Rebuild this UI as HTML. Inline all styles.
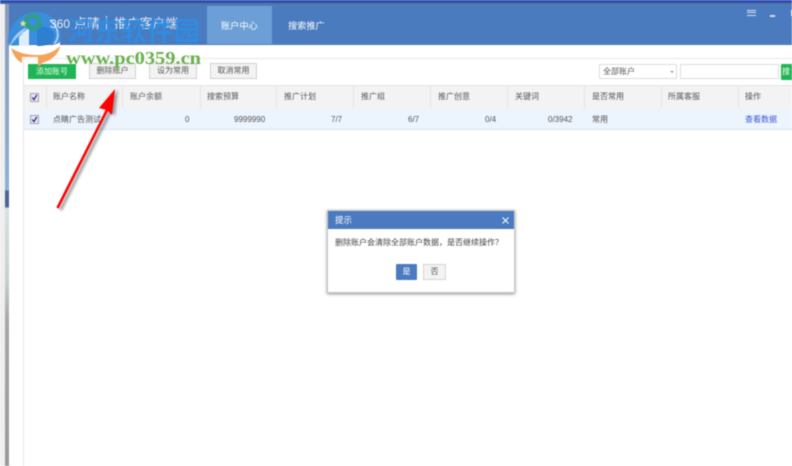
<!DOCTYPE html>
<html lang="zh-CN"><head><meta charset="utf-8">
<style>
*{box-sizing:border-box;margin:0;padding:0}
html,body{width:792px;height:466px;overflow:hidden;background:#fff}
body{font-family:"Liberation Sans","Noto Sans CJK SC",sans-serif;font-size:8px;color:#444;position:relative}
.a{position:absolute;white-space:nowrap}
.wrap{position:absolute;left:0;top:0;width:792px;height:466px;filter:blur(.42px)}
.btn{position:absolute;top:63px;height:16px;background:#f3f3f3;border:1px solid #d2d2d2;text-align:center;line-height:14px;font-size:8px;color:#555}
.sep{position:absolute;top:85px;height:24px;width:1px;background:#e6e6e6}
.th{position:absolute;top:92px;line-height:10px;color:#555;white-space:nowrap}
.td{position:absolute;top:115px;line-height:10px;color:#555;white-space:nowrap}
.cb{position:absolute;left:30px;width:9px;height:9px;background:#e6e6ee;border:1px solid #a4a4b4}
</style></head><body>
<div class="wrap">
<div class="a" style="left:0;top:0;width:5px;height:466px;background:#efefef"></div>
<div class="a" style="left:5px;top:0;width:4px;height:466px;background:linear-gradient(#8a9bb8 0,#8fb0d4 190px,#4a6498 191px,#4a6498 207px,#d8e0e0 208px,#c8d0d0 280px,#a8a8a8 320px,#999 466px)"></div>
<div class="a" style="left:0;top:0;width:792px;height:4px;background:linear-gradient(#1e44b0,#2a52b8 60%,#777)"></div>
<div class="a" style="left:9px;top:4px;width:783px;height:41px;background:#4a7bbf"></div>
<div class="a" style="left:207px;top:6px;width:65px;height:38px;background:#6b9fd6"></div>
<div class="a" style="left:221px;top:21px;color:#fff;font-size:9.2px;line-height:10px">账户中心</div>
<div class="a" style="left:288px;top:21px;color:#fff;font-size:9.2px;line-height:10px">搜索推广</div>
<div class="a" style="left:747px;top:10px;width:9px;height:6px;border-top:1px solid #dde;border-bottom:1px solid #dde"></div>
<div class="a" style="left:747px;top:12px;width:9px;height:1px;background:#dde"></div>
<div class="a" style="left:770px;top:15px;width:5px;height:2px;background:#dde"></div>
<div class="a" style="left:791px;top:10px;width:1px;height:6px;background:#dde"></div>

<div class="a" style="left:9px;top:45px;width:783px;height:421px;background:#fff"></div>
<div class="a" style="left:23px;top:58px;width:769px;height:1px;background:#e8e8e8"></div>
<div class="a" style="left:23px;top:58px;width:1px;height:408px;background:#e6e6e6"></div>

<div class="btn" style="left:28px;top:64px;width:48px;height:15px;background:#1fb455;border-color:#1fb455;color:#e8fff0">添加账号</div>
<div class="btn" style="left:89px;width:47px">删除账户</div>
<div class="btn" style="left:149px;width:48px">设为常用</div>
<div class="btn" style="left:210px;width:47px">取消常用</div>

<div class="a" style="left:599px;top:64px;width:78px;height:15px;border:1px solid #ddd;line-height:13px;padding-left:3px;color:#555">全部账户</div>
<div class="a" style="left:670px;top:71px;border-left:2px solid transparent;border-right:2px solid transparent;border-top:2px solid #999"></div>
<div class="a" style="left:680px;top:64px;width:99px;height:15px;border:1px solid #ddd"></div>
<div class="a" style="left:781px;top:64px;width:11px;height:16px;background:#1fb455;color:#fff;line-height:15px;padding-left:1px;overflow:hidden;border-radius:1px 0 0 1px">搜</div>

<div class="a" style="left:24px;top:85px;width:768px;height:24px;background:#f3f3f3;border-top:1px solid #e4e4e4"></div>
<div class="a" style="left:24px;top:109px;width:768px;height:21px;background:#ecf4fd;border-bottom:1px solid #d8e6f3"></div>
<div class="sep" style="left:46px"></div><div class="sep" style="left:122px"></div><div class="sep" style="left:200px"></div><div class="sep" style="left:276px"></div><div class="sep" style="left:353px"></div><div class="sep" style="left:430px"></div><div class="sep" style="left:507px"></div><div class="sep" style="left:584px"></div><div class="sep" style="left:661px"></div><div class="sep" style="left:738px"></div>
<div class="cb" style="top:93px"><svg width="7" height="7" viewBox="0 0 7 7" style="display:block"><path d="M1.200 3.500L3 5.600L5.800 .8" stroke="#22228a" stroke-width="1.200" fill="none"/></svg></div>
<div class="cb" style="top:115px"><svg width="7" height="7" viewBox="0 0 7 7" style="display:block"><path d="M1.200 3.500L3 5.600L5.800 .8" stroke="#22228a" stroke-width="1.200" fill="none"/></svg></div>
<div class="th" style="left:53px">账户名称</div>
<div class="th" style="left:130px">账户余额</div>
<div class="th" style="left:207px">搜索预算</div>
<div class="th" style="left:284px">推广计划</div>
<div class="th" style="left:361px">推广组</div>
<div class="th" style="left:438px">推广创意</div>
<div class="th" style="left:515px">关键词</div>
<div class="th" style="left:592px">是否常用</div>
<div class="th" style="left:668px">所属客服</div>
<div class="th" style="left:745px">操作</div>
<div class="td" style="left:53px">点睛广告测试</div>
<div class="td" style="left:185px">0</div>
<div class="td" style="left:234px">9999990</div>
<div class="td" style="left:331px">7/7</div>
<div class="td" style="left:408px">6/7</div>
<div class="td" style="left:485px">0/4</div>
<div class="td" style="left:548px">0/3942</div>
<div class="td" style="left:592px">常用</div>
<div class="td" style="left:745px;color:#3a55d8">查看数据</div>

<div class="a" style="left:327px;top:210px;width:188px;height:83px;background:#fff;border:1px solid #c8c8c8;box-shadow:0 1px 3px rgba(0,0,0,.45)">
  <div class="a" style="left:0;top:0;width:186px;height:18px;background:#4a7bc0;color:#fff;line-height:18px;padding-left:7px;font-size:8.5px">提示</div>
  <svg class="a" style="left:173px;top:5px" width="9" height="9" viewBox="0 0 9 9"><path d="M1.500 1.500L7.500 7.500M7.500 1.500L1.500 7.500" stroke="#fff" stroke-width="1"/></svg>
  <div class="a" style="left:7px;top:26px;line-height:12px;font-size:8px;color:#444">删除账户会清除全部账户数据，是否继续操作？</div>
  <div class="a" style="left:68px;top:53px;width:21px;height:16px;background:#4a7bc0;border-radius:1px;color:#fff;text-align:center;line-height:16px">是</div>
  <div class="a" style="left:95px;top:53px;width:23px;height:16px;background:#f3f3f3;border:1px solid #d5d5d5;color:#555;text-align:center;line-height:14px">否</div>
</div>
</div>

<svg class="a" style="left:0;top:0;filter:blur(.5px)" width="792" height="215" viewBox="0 0 792 215">
  <defs><filter id="s" x="-30%" y="-10%" width="160%" height="120%"><feGaussianBlur stdDeviation="1.300"/></filter></defs>
  <path d="M58 209L108 110" stroke="#333" stroke-opacity=".5" stroke-width="3" fill="none" filter="url(#s)" transform="translate(2.500,1)"/>
  <path d="M99 108L115 89L112 115L107 110Z" fill="#333" fill-opacity=".45" filter="url(#s)" transform="translate(3,1)"/>
  <path d="M57.500 208L107 110" stroke="#f00" stroke-width="2.500" fill="none"/>
  <path d="M99 108L115 89L112 115L107 110Z" fill="#f00"/>
  <!-- logo -->
  <path d="M8 46C6 27 20 12 36 12C52 12 62 24 61 42L8 46Z" fill="#3a8fe0" fill-opacity=".9"/>
  <path d="M27 27C18 31 12 38 10 46C14 41 18 36 23 33Z" fill="#fff" fill-opacity=".55"/>
  <path d="M19 37L27 29H29V46H19Z" fill="#eaf3fb" fill-opacity=".95"/>
  <path d="M37 27C50 25 55 32 54 38C53 43 47 46 37 46Z" fill="#2f7fd0"/>
  <path d="M50 20C59 27 60 38 54 44" stroke="#dcebf8" stroke-opacity=".7" stroke-width="2" fill="none"/>
  <circle cx="33" cy="22" r="6.500" stroke="#2f9f8a" stroke-width="4.500" fill="none"/>
  <path d="M23 20L24 22.300L26.500 22.500L24.600 24L25.300 26.500L23 25.200L20.800 26.500L21.500 24L19.500 22.500L22 22.300Z" fill="#d9e88a"/>
  <path d="M9 44C20 52 44 52 60 42L60 47C45 56 22 55 10 48Z" fill="#fff" fill-opacity=".95"/>
  <path d="M11 48C20 54 30 55 38 55C46 55 54 52 60 46C59 54 52 60 42 63L40 66H38V57H22V63C16 60 13 54 11 48Z" fill="#f3a35a"/>
  <text x="66" y="64" font-family="'Liberation Serif',serif" font-weight="700" font-size="17.500" fill="#6ab04c" textLength="135" lengthAdjust="spacingAndGlyphs">www.pc0359.cn</text>
</svg>
<div style="position:absolute;left:0;top:0;width:792px;height:60px;filter:blur(.6px)">
<div class="a" style="left:50px;top:16px;color:#e8f0f8;font-size:12px;line-height:16px">360</div>
<div class="a" style="left:74px;top:15px;color:#e8f0f8;font-size:13px;line-height:18px">点睛</div>
<div class="a" style="left:106px;top:16px;width:1px;height:14px;background:#e8f0f8"></div>
<div class="a" style="left:114px;top:16px;color:#e8f0f8;font-size:12.8px;line-height:16px">推广客户端</div>
</div>
<svg class="a" style="left:0;top:0;filter:blur(.5px)" width="300" height="60" viewBox="0 0 300 60">
  <text x="68" y="41" font-family="'Noto Sans CJK SC','Liberation Sans',sans-serif" font-weight="700" font-size="27" fill="#2c8fe6" fill-opacity=".82" textLength="132" lengthAdjust="spacingAndGlyphs">河东软件园</text>
</svg>
</body></html>
